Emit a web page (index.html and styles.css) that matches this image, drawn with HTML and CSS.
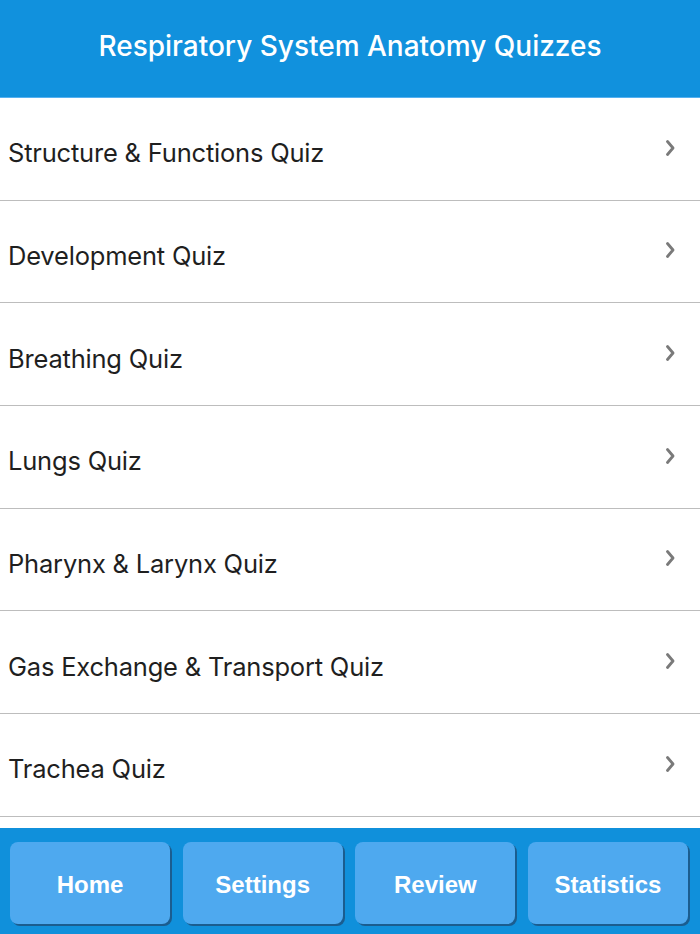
FILE: index.html
```html
<!DOCTYPE html>
<html>
<head>
<meta charset="utf-8">
<link rel="stylesheet" href="styles.css">
</head>
<body>
<div class="app">
  <header class="header">
    <h1 class="title">Respiratory System Anatomy Quizzes</h1>
  </header>
  <main class="list">
    <div class="row"><span class="label">Structure &amp; Functions Quiz</span><svg class="chev" width="9" height="16" viewBox="0 0 9 16"><polyline points="1.5,1.5 7,8 1.5,14.5" fill="none" stroke="#7a7a7a" stroke-width="2.8" stroke-linecap="round" stroke-linejoin="round"/></svg></div>
    <div class="row"><span class="label">Development Quiz</span><svg class="chev" width="9" height="16" viewBox="0 0 9 16"><polyline points="1.5,1.5 7,8 1.5,14.5" fill="none" stroke="#7a7a7a" stroke-width="2.8" stroke-linecap="round" stroke-linejoin="round"/></svg></div>
    <div class="row"><span class="label">Breathing Quiz</span><svg class="chev" width="9" height="16" viewBox="0 0 9 16"><polyline points="1.5,1.5 7,8 1.5,14.5" fill="none" stroke="#7a7a7a" stroke-width="2.8" stroke-linecap="round" stroke-linejoin="round"/></svg></div>
    <div class="row"><span class="label">Lungs Quiz</span><svg class="chev" width="9" height="16" viewBox="0 0 9 16"><polyline points="1.5,1.5 7,8 1.5,14.5" fill="none" stroke="#7a7a7a" stroke-width="2.8" stroke-linecap="round" stroke-linejoin="round"/></svg></div>
    <div class="row"><span class="label">Pharynx &amp; Larynx Quiz</span><svg class="chev" width="9" height="16" viewBox="0 0 9 16"><polyline points="1.5,1.5 7,8 1.5,14.5" fill="none" stroke="#7a7a7a" stroke-width="2.8" stroke-linecap="round" stroke-linejoin="round"/></svg></div>
    <div class="row"><span class="label">Gas Exchange &amp; Transport Quiz</span><svg class="chev" width="9" height="16" viewBox="0 0 9 16"><polyline points="1.5,1.5 7,8 1.5,14.5" fill="none" stroke="#7a7a7a" stroke-width="2.8" stroke-linecap="round" stroke-linejoin="round"/></svg></div>
    <div class="row"><span class="label">Trachea Quiz</span><svg class="chev" width="9" height="16" viewBox="0 0 9 16"><polyline points="1.5,1.5 7,8 1.5,14.5" fill="none" stroke="#7a7a7a" stroke-width="2.8" stroke-linecap="round" stroke-linejoin="round"/></svg></div>
    <div class="row"><span class="label">Bronchi Quiz</span></div>
  </main>
  <nav class="tabbar">
    <button class="tab">Home</button>
    <button class="tab">Settings</button>
    <button class="tab">Review</button>
    <button class="tab">Statistics</button>
  </nav>
</div>
</body>
</html>
```
FILE: styles.css
```css
html, body {
  margin: 0;
  padding: 0;
  background: #ffffff;
}
.app {
  width: 700px;
  height: 934px;
  display: flex;
  flex-direction: column;
  overflow: hidden;
}
.header {
  height: 97px;
  flex: none;
  background: #1191dd;
  border-bottom: 1.33px solid #55b0f0;
  display: flex;
  align-items: center;
  justify-content: center;
}
.title {
  margin: 0;
  padding-bottom: 6px;
  color: #ffffff;
  font-family: Inter, "Noto Sans", sans-serif;
  font-weight: 500;
  font-size: 28px;
  letter-spacing: 0;
}
.list {
  flex: 1;
  overflow: hidden;
  min-height: 0;
}
.row {
  height: 101.67px;
  border-bottom: 1px solid #bdbdbd;
  display: flex;
  align-items: center;
  justify-content: space-between;
  padding: 0 25px 0 8px;
  box-sizing: content-box;
}
.label {
  font-family: Inter, "Noto Sans", sans-serif;
  font-size: 25.5px;
  color: #1f1f1f;
  padding-top: 8px;
  letter-spacing: -0.2px;
}
.chev {
  display: block;
  margin-top: -2px;
}
.tabbar {
  height: 106px;
  flex: none;
  background: #1090db;
  display: flex;
  gap: 12.67px;
  padding: 14px 12px 0 10px;
  box-sizing: border-box;
}
.tab {
  width: 160px;
  height: 82px;
  border: none;
  border-radius: 8px;
  background: #4ea9ef;
  box-shadow: 2px 2px 0 #1b5d8f;
  color: #ffffff;
  font-family: "Liberation Sans", Arial, sans-serif;
  font-weight: bold;
  font-size: 24px;
  padding: 4px 0 0 0;
}
```
